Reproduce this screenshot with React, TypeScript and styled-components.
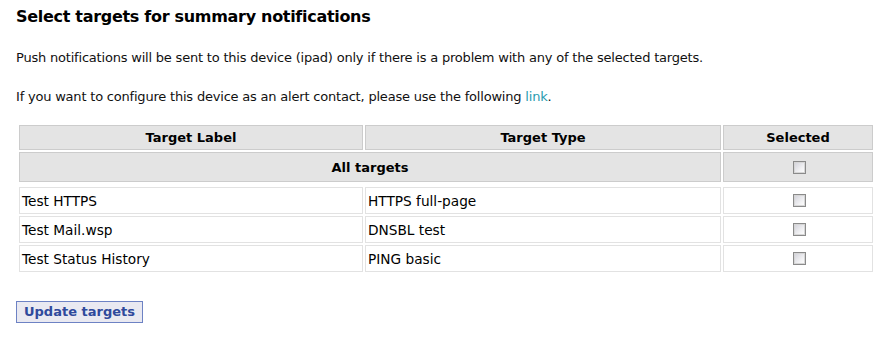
import React from "react";
import styled, { createGlobalStyle } from "styled-components";

const Global = createGlobalStyle`
  html, body { margin: 0; padding: 0; background: #ffffff; }
  body { font-family: "DejaVu Sans", Verdana, sans-serif; color: #111111; }
`;

const Page = styled.div`
  padding: 6px 0 0 16px;
  width: 860px;
`;

const Title = styled.h1`
  margin: 0;
  font-size: 16px;
  letter-spacing: -0.3px;
  line-height: 22px;
  font-weight: bold;
  color: #000;
`;

const Para = styled.p<{ $top: number }>`
  margin: ${(p) => p.$top}px 0 0 0;
  font-size: 13px;
  letter-spacing: -0.2px;
  line-height: 16px;
`;

const Link = styled.a`
  color: #2a9bb0;
  text-decoration: none;
`;

const Grid = styled.div<{ $top: number }>`
  display: grid;
  grid-template-columns: 344px 356px 150px;
  column-gap: 2px;
  row-gap: 2px;
  margin: ${(p) => p.$top}px 0 0 3px;
`;

const HeadCell = styled.div<{ $h: number; $span?: number }>`
  grid-column: span ${(p) => p.$span ?? 1};
  height: ${(p) => p.$h}px;
  box-sizing: border-box;
  background: #e4e4e4;
  border: 1px solid #cccccc;
  display: flex;
  align-items: center;
  justify-content: center;
  font-size: 13px;
  font-weight: bold;
  color: #000;
`;

const Cell = styled.div<{ $center?: boolean }>`
  height: 27px;
  box-sizing: border-box;
  border: 1px solid #e2e2e2;
  background: #fff;
  display: flex;
  align-items: center;
  justify-content: ${(p) => (p.$center ? "center" : "flex-start")};
  padding: 0 2px;
  font-size: 13.7px;
  color: #000;
`;

const Check = styled.span`
  display: inline-block;
  width: 13px;
  height: 13px;
  box-sizing: border-box;
  border: 1px solid #8a8a8a;
  background: linear-gradient(135deg, #d0d0d8 0%, #f2f2f4 65%, #ffffff 100%);
  box-shadow: inset 0 0 0 1px #d6d6d6;
  margin-left: 2px;
`;

const Button = styled.button`
  margin-top: 29px;
  height: 22px;
  padding: 0 7px 0 7px;
  box-sizing: border-box;
  border: 1px solid #6d82c4;
  background: #e9e9f1;
  color: #2f4a9c;
  font-family: "DejaVu Sans", Verdana, sans-serif;
  font-size: 13px;
  font-weight: bold;
  line-height: 20px;
  cursor: pointer;
`;

const rows = [
  { label: "Test HTTPS", type: "HTTPS full-page" },
  { label: "Test Mail.wsp", type: "DNSBL test" },
  { label: "Test Status History", type: "PING basic" },
];

export default function App() {
  return (
    <>
      <Global />
      <Page>
        <Title>Select targets for summary notifications</Title>
        <Para $top={22}>
          Push notifications will be sent to this device (ipad) only if there is a problem with any of the selected targets.
        </Para>
        <Para $top={23}>
          If you want to configure this device as an alert contact, please use the following <Link href="#">link</Link>.
        </Para>
        <Grid $top={20}>
          <HeadCell $h={25}>Target Label</HeadCell>
          <HeadCell $h={25}>Target Type</HeadCell>
          <HeadCell $h={25}>Selected</HeadCell>
          <HeadCell $h={30} $span={2}>All targets</HeadCell>
          <HeadCell $h={30}><Check /></HeadCell>
        </Grid>
        <Grid $top={5}>
          {rows.map((r) => (
            <React.Fragment key={r.label}>
              <Cell>{r.label}</Cell>
              <Cell>{r.type}</Cell>
              <Cell $center><Check /></Cell>
            </React.Fragment>
          ))}
        </Grid>
        <Button>Update targets</Button>
      </Page>
    </>
  );
}
